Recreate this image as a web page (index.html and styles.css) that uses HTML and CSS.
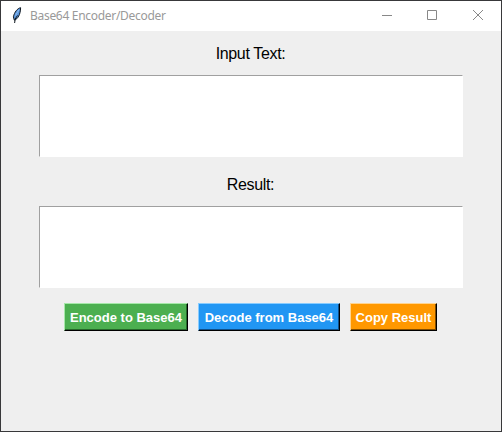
FILE: index.html
```html
<!DOCTYPE html>
<html lang="en">
<head>
<meta charset="utf-8">
<title>Base64 Encoder/Decoder</title>
<link rel="stylesheet" href="styles.css">
</head>
<body>
<div class="window">
  <header class="titlebar">
    <svg class="feather" width="10" height="17" viewBox="0 0 10 17">
      <path d="M8.600 .7C5.500 1.200 2.300 5.300 1.400 9.800L2.300 13.200C5.800 12 8.500 7.500 8.600 .7Z" fill="#5b96dc" stroke="#101820" stroke-width="1"/>
      <path d="M5.500 8.500L3.200 12L2.600 16" fill="none" stroke="#101820" stroke-width="1"/>
      <path d="M6.800 3L3.500 8.500" fill="none" stroke="#8fbdf0" stroke-width="1"/>
    </svg>
    <span class="title">Base64 Encoder/Decoder</span>
    <div class="controls">
      <svg width="46" height="30" viewBox="0 0 46 30"><path d="M18 14.500h10"/></svg>
      <svg width="46" height="30" viewBox="0 0 46 30"><path d="M17.500 9.500h9v9h-9z"/></svg>
      <svg width="46" height="30" viewBox="0 0 46 30"><path d="M17 9l10 10M27 9l-10 10"/></svg>
    </div>
  </header>
  <main class="content">
    <label class="label" for="input">Input Text:</label>
    <textarea class="box" id="input"></textarea>
    <label class="label result" for="result">Result:</label>
    <textarea class="box" id="result"></textarea>
    <div class="buttons">
      <button class="btn encode">Encode to Base64</button>
      <button class="btn decode">Decode from Base64</button>
      <button class="btn copy">Copy Result</button>
    </div>
  </main>
</div>
</body>
</html>
```
FILE: styles.css
```css
* { box-sizing: border-box; }
body { margin: 0; }
.window {
  width: 502px;
  height: 432px;
  border: 1px solid #38383a;
  background: #efefef;
  font-family: "Liberation Sans", Arial, sans-serif;
}
.titlebar {
  display: flex;
  align-items: center;
  height: 30px;
  padding-left: 11px;
  background: #fff;
}
.feather { margin: -1px 8px 0 0; }
.title {
  font: 12px/30px "Noto Sans", sans-serif;
  letter-spacing: -0.3px;
  color: #999;
  white-space: nowrap;
}
.controls {
  display: flex;
  margin-left: auto;
  margin-right: -1px;
}
.controls svg {
  fill: none;
  stroke: #888;
  stroke-width: 1;
}
.content {
  display: flex;
  flex-direction: column;
  align-items: center;
  padding: 13px 1px 0 0;
}
.label {
  height: 20px;
  margin-bottom: 11px;
  font-size: 16px;
  line-height: 20px;
  letter-spacing: -0.35px;
  color: #000;
}
.result { margin-top: 18px; }
.box {
  display: block;
  width: 424px;
  height: 82px;
  margin: 0 0 0 1px;
  padding: 2px;
  border: 1px solid;
  border-color: #a0a0a0 #fff #fff #a0a0a0;
  border-radius: 0;
  outline: 0;
  resize: none;
  background: #fff;
}
.buttons {
  display: flex;
  gap: 10px;
  margin-top: 15px;
}
.btn {
  height: 28px;
  padding: 1px 0 0;
  border: 1px solid;
  border-right-color: #000;
  border-bottom-color: #000;
  border-radius: 0;
  font: bold 13px/24px "Liberation Sans", Arial, sans-serif;
  color: #fff;
  white-space: nowrap;
}
.encode {
  width: 124px;
  background: #4caf50;
  border-top-color: #a6e8a9;
  border-left-color: #a6e8a9;
  box-shadow: inset -1px -1px #26682a;
}
.decode {
  width: 142px;
  background: #2196f3;
  border-top-color: #88ccff;
  border-left-color: #88ccff;
  box-shadow: inset -1px -1px #104f88;
}
.copy {
  width: 87px;
  background: #ff9800;
  border-top-color: #ffd490;
  border-left-color: #ffd490;
  box-shadow: inset -1px -1px #804c00;
}
```
